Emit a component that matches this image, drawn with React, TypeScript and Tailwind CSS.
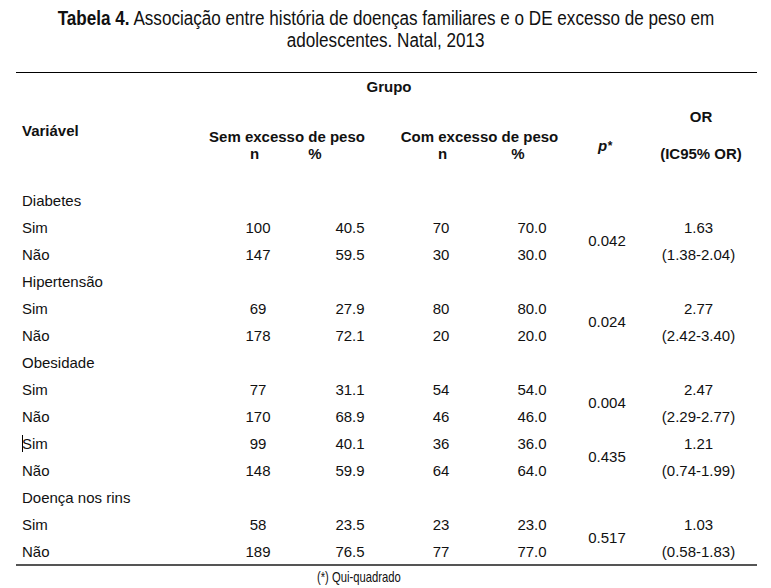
import React from "react";

type Pair = {
  yes: [string, string, string, string];
  no: [string, string, string, string];
  p: string;
  or: string;
  ci: string;
};

type Section = { title?: string; pair: Pair; caret?: boolean };

const SECTIONS: Section[] = [
  {
    title: "Diabetes",
    pair: { yes: ["100", "40.5", "70", "70.0"], no: ["147", "59.5", "30", "30.0"], p: "0.042", or: "1.63", ci: "(1.38-2.04)" },
  },
  {
    title: "Hipertensão",
    pair: { yes: ["69", "27.9", "80", "80.0"], no: ["178", "72.1", "20", "20.0"], p: "0.024", or: "2.77", ci: "(2.42-3.40)" },
  },
  {
    title: "Obesidade",
    pair: { yes: ["77", "31.1", "54", "54.0"], no: ["170", "68.9", "46", "46.0"], p: "0.004", or: "2.47", ci: "(2.29-2.77)" },
  },
  {
    caret: true,
    pair: { yes: ["99", "40.1", "36", "36.0"], no: ["148", "59.9", "64", "64.0"], p: "0.435", or: "1.21", ci: "(0.74-1.99)" },
  },
  {
    title: "Doença nos rins",
    pair: { yes: ["58", "23.5", "23", "23.0"], no: ["189", "76.5", "77", "77.0"], p: "0.517", or: "1.03", ci: "(0.58-1.83)" },
  },
];

function Cell({ children, className = "" }: { children: React.ReactNode; className?: string }) {
  return <div className={`flex items-center justify-center text-center whitespace-nowrap ${className}`}>{children}</div>;
}

function PairRows({ pair, caret }: { pair: Pair; caret?: boolean }) {
  return (
    <>
      <div className="col-start-1 flex items-center">
        {caret && <span className="inline-block w-px h-[17px] bg-black -mr-px" />}
        Sim
      </div>
      {pair.yes.map((v, i) => (
        <Cell key={"y" + i}>{v}</Cell>
      ))}
      <Cell className="row-span-2 col-start-6">{pair.p}</Cell>
      <div className="row-span-2 col-start-7 grid grid-rows-2">
        <Cell>{pair.or}</Cell>
        <Cell>{pair.ci}</Cell>
      </div>
      <div className="col-start-1 flex items-center">Não</div>
      {pair.no.map((v, i) => (
        <Cell key={"n" + i}>{v}</Cell>
      ))}
    </>
  );
}

export default function App() {
  return (
    <div className="w-[771px] h-[588px] bg-white text-[#111] font-['Liberation_Sans',Arial,sans-serif] text-[15px] leading-[18px] overflow-hidden">
      <div className="flex flex-col items-center pt-[7px] text-[20px] leading-[22px]">
        <div className="whitespace-nowrap scale-x-[0.855]">
          <b>Tabela 4.</b> Associação entre história de doenças familiares e o DE excesso de peso em
        </div>
        <div className="whitespace-nowrap scale-x-[0.855]">adolescentes. Natal, 2013</div>
      </div>

      <div className="mt-[21px] ml-[16px] mr-[14px] h-px bg-black" />

      <div className="h-[114px] font-bold">
        <div className="flex justify-center pl-[7px] pt-[5px]">Grupo</div>
        <div className="flex items-start pl-[22px]">
          <div className="w-[185px] mt-[26px]">Variável</div>
          <div className="w-[160px] mt-[32px]">
            <div className="text-center whitespace-nowrap">Sem excesso de peso</div>
            <div className="flex -mt-px">
              <span className="ml-[43px]">n</span>
              <span className="ml-[49px]">%</span>
            </div>
          </div>
          <div className="w-[161px] ml-[32px] mt-[32px]">
            <div className="text-center whitespace-nowrap">Com excesso de peso</div>
            <div className="flex -mt-px">
              <span className="ml-[39px]">n</span>
              <span className="ml-[64px]">%</span>
            </div>
          </div>
          <div className="w-[62px] mt-[41px] pl-[38px] italic">
            p<sup className="text-[12px] relative -top-[1px]">*</sup>
          </div>
          <div className="w-[100px] ml-[29px] mt-[12px] flex flex-col items-center">
            <div>OR</div>
            <div className="mt-[19px] whitespace-nowrap">(IC95% OR)</div>
          </div>
        </div>
      </div>

      <div className="grid grid-cols-[200px_72px_112px_70px_112px_38px_145px] auto-rows-[27px] pl-[22px]">
        {SECTIONS.map((s, i) => (
          <React.Fragment key={i}>
            {s.title && <div className="col-span-7 flex items-center">{s.title}</div>}
            <PairRows pair={s.pair} caret={s.caret} />
          </React.Fragment>
        ))}
      </div>

      <div className="-mt-px ml-[16px] mr-[14px] h-[2px] bg-[#555]" />

      <div className="flex justify-center pr-[54px] pt-[2px] text-[15px]">
        <div className="whitespace-nowrap scale-x-[0.75]">(*) Qui-quadrado</div>
      </div>
    </div>
  );
}
